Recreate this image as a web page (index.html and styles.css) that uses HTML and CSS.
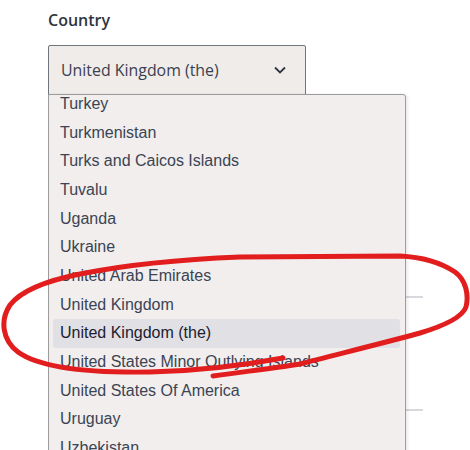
FILE: index.html
```html
<!DOCTYPE html>
<html lang="en">
<head>
<meta charset="utf-8">
<title>Country select</title>
<link rel="stylesheet" href="styles.css">
</head>
<body>
<div class="page">
  <div class="field">
    <label class="label">Country</label>
    <div class="select">
      <span class="select-value">United Kingdom (the)</span>
      <svg class="chevron" width="12" height="8" viewBox="0 0 12 8"><path d="M1 1.5 L6 6.5 L11 1.5" fill="none" stroke="#2f3440" stroke-width="1.8"/></svg>
    </div>
  </div>
  <div class="under-line first"></div>
  <div class="under-line second"></div>

  <div class="dropdown">
    <ul class="options">
      <li class="option">Turkey</li>
      <li class="option">Turkmenistan</li>
      <li class="option">Turks and Caicos Islands</li>
      <li class="option">Tuvalu</li>
      <li class="option">Uganda</li>
      <li class="option">Ukraine</li>
      <li class="option">United Arab Emirates</li>
      <li class="option">United Kingdom</li>
      <li class="option selected">United Kingdom (the)</li>
      <li class="option">United States Minor Outlying Islands</li>
      <li class="option">United States Of America</li>
      <li class="option">Uruguay</li>
      <li class="option">Uzbekistan</li>
      <li class="option">Vanuatu</li>
    </ul>
  </div>

  <svg class="annotation" width="470" height="450" viewBox="0 0 470 450">
    <path d="M 283 358 C 240 366, 200 371, 150 372 C 90 373, 40 368, 18 352 C 2 340, 0 320, 10 305 C 20 292, 45 281, 80 274 C 130 264, 190 259, 240 257 L 400 256 C 420 257, 440 262, 455 272 C 466 280, 469 295, 466 307 C 462 318, 440 327, 420 333 C 380 344, 330 356, 300 364 C 270 369, 240 372, 213 376" fill="none" stroke="#e21d1d" stroke-width="5" stroke-linecap="round" stroke-linejoin="round"/>
  </svg>
</div>
</body>
</html>
```

FILE: styles.css
```css
html, body {
  margin: 0;
  padding: 0;
  background: #ffffff;
}

.page {
  position: relative;
  width: 470px;
  height: 450px;
  overflow: hidden;
}

.field {
  padding: 9px 0 0 48px;
  display: flex;
  flex-direction: column;
  gap: 14px;
}

.label {
  font-family: "Open Sans", "Noto Sans", sans-serif;
  font-weight: 600;
  font-size: 16px;
  line-height: 22px;
  color: #2f3540;
}

.select {
  box-sizing: border-box;
  width: 258px;
  height: 51px;
  border: 1px solid #70747b;
  border-radius: 2px;
  background: #f0ecea;
  display: flex;
  align-items: center;
  justify-content: space-between;
  padding: 0 19px 0 12px;
}

.select-value {
  font-family: "Open Sans", "Noto Sans", sans-serif;
  font-size: 15.9px;
  color: #3a4150;
  margin-top: -2px;
}

.chevron {
  margin-top: -2px;
}

.under-line {
  margin-left: 48px;
  width: 375px;
  height: 2px;
  background: #d6d9dd;
}

.under-line.first {
  margin-top: 200px;
}

.under-line.second {
  margin-top: 111px;
}

.dropdown {
  position: absolute;
  top: 94px;
  left: 48px;
  width: 358px;
  height: 380px;
  box-sizing: border-box;
  border: 1px solid #9c9c9c;
  border-radius: 2px 3px 0 0;
  background: #f1eeed;
  box-shadow: 2px 0 3px rgba(0, 0, 0, 0.08);
  overflow: hidden;
}

.options {
  list-style: none;
  margin: -5px 0 0 0;
  padding: 0 5px 0 4px;
}

.option {
  height: 28.67px;
  line-height: 28.67px;
  padding-left: 7px;
  font-family: "Liberation Sans", Arial, sans-serif;
  font-size: 16px;
  color: #3b4454;
  white-space: nowrap;
  border-radius: 3px;
}

.option.selected {
  background: #e1e0e5;
  color: #1c2130;
}

.annotation {
  position: absolute;
  top: 0;
  left: 0;
  pointer-events: none;
}
```
